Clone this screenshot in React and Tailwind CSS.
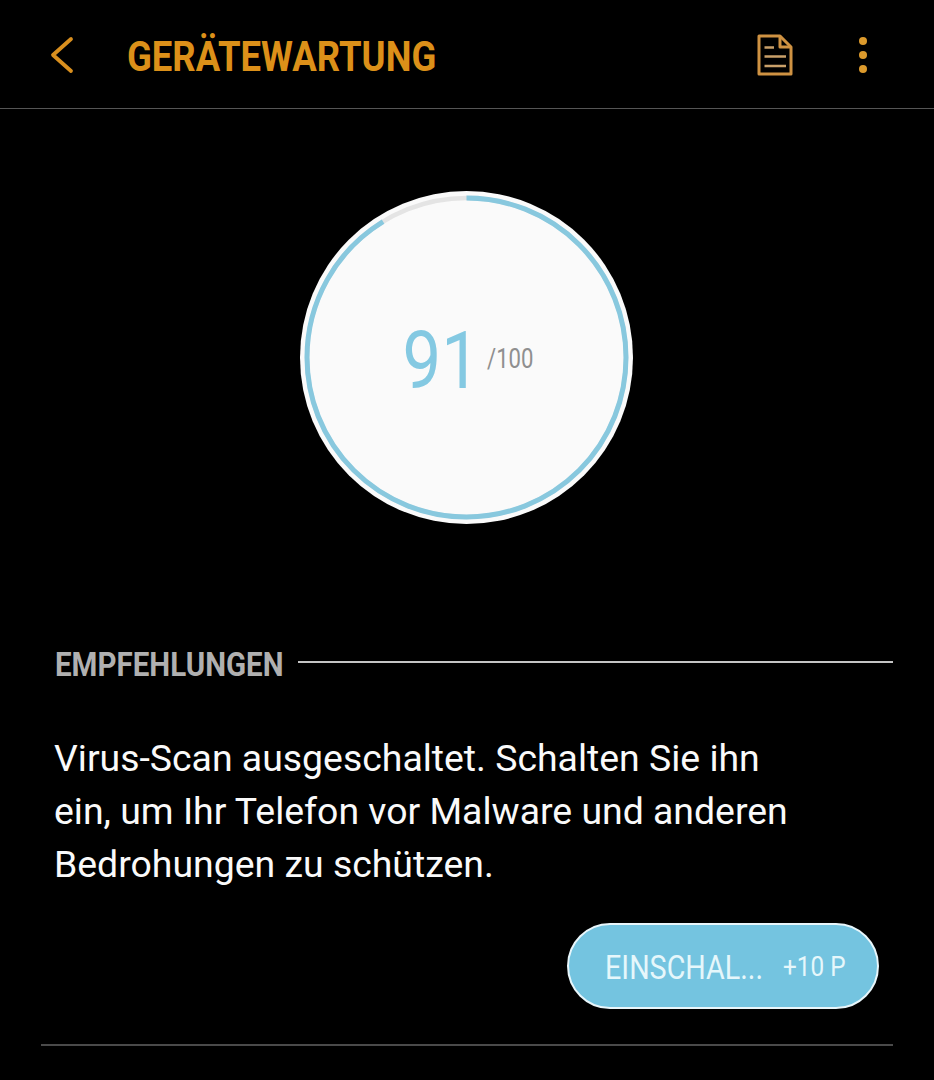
import React from 'react';

const Ring = () => {
    const r = 159.5;
    const c = 2 * Math.PI * r;
    return (
        <svg viewBox="0 0 333 333" className="absolute inset-0 w-full h-full -rotate-90">
            <circle cx="166.5" cy="166.5" r={r} fill="none" stroke="#e4e4e4" strokeWidth="4.5" />
            <circle
                cx="166.5"
                cy="166.5"
                r={r}
                fill="none"
                stroke="#88c8de"
                strokeWidth="5"
                strokeDasharray={`${c * 0.912} ${c}`}
            />
        </svg>
    );
};

const App = () => {
    return (
        <div className="w-[934px] h-[1080px] bg-black overflow-hidden font-['Roboto',sans-serif]">
            {/* Kopfzeile */}
            <header className="h-[109px] border-b border-[#555555] flex items-center pl-[50px] pr-[67px] pt-[2px]">
                <svg width="24" height="38" viewBox="0 0 24 38" fill="none">
                    <path d="M21 3 L3 19 L21 35" stroke="#d98f1e" strokeWidth="3.8" strokeLinecap="round" strokeLinejoin="round" />
                </svg>
                <h1 className="ml-[53px] mt-[4px] text-[42px] leading-none font-bold text-[#dc9019] origin-left scale-x-[0.868] whitespace-nowrap">
                    GERÄTEWARTUNG
                </h1>
                <div className="ml-auto flex items-center gap-[66px]">
                    <svg width="36" height="42" viewBox="0 0 36 42" fill="none" stroke="#cf9242" strokeWidth="3" strokeLinejoin="round">
                        <path d="M2 2 H23 L34 13 V40 H2 Z" />
                        <path d="M23 2 V13 H34" />
                        <path d="M7.5 13.5 H17 M7.5 22.5 H29 M7.5 32 H29" stroke="#c9a069" strokeWidth="2.6" />
                    </svg>
                    <div className="flex flex-col gap-[6px]">
                        <div className="w-2 h-2 rounded-full bg-[#dc9a2c]" />
                        <div className="w-2 h-2 rounded-full bg-[#dc9a2c]" />
                        <div className="w-2 h-2 rounded-full bg-[#dc9a2c]" />
                    </div>
                </div>
            </header>

            {/* Punktzahl */}
            <div className="pt-[82px] pr-[1px] flex justify-center">
                <div className="relative w-[333px] h-[333px] rounded-full bg-[#fafafa] flex items-center justify-center">
                    <Ring />
                    <div className="flex items-baseline pl-[2px] mt-[6px]">
                        <span className="text-[80px] leading-none font-[430] text-[#84c9e2] origin-right scale-x-[0.86]">91</span>
                        <span className="ml-[7px] text-[28px] leading-none text-[#8f8f8f] -translate-y-[20px] origin-left scale-x-[0.79]">/100</span>
                    </div>
                </div>
            </div>

            {/* Empfehlungen */}
            <div className="mt-[120px] pl-[55px] pr-[41px] flex items-center h-[40px]">
                <span className="w-[243px] shrink-0 text-[33px] leading-none font-bold text-[#b0b0b0] origin-left scale-x-[0.895] whitespace-nowrap">
                    EMPFEHLUNGEN
                </span>
                <div className="flex-1 h-[2px] bg-[#c4c4c4] -mt-[4px]" />
            </div>

            <p className="mt-[48px] ml-[54px] w-[800px] text-[37.4px] leading-[53px] text-[#fafafa] whitespace-nowrap">
                Virus-Scan ausgeschaltet. Schalten Sie ihn
                <br />
                ein, um Ihr Telefon vor Malware und anderen
                <br />
                Bedrohungen zu schützen.
            </p>

            <div className="mt-[32px] pr-[55px] flex justify-end">
                <button className="w-[312px] h-[86px] rounded-full bg-[#74c4e0] border-2 border-[#e8f6fb] flex items-center pl-[36px] pt-[3px] text-[#e6f7fb] whitespace-nowrap">
                    <span className="w-[178px] text-left text-[33px] leading-none origin-left scale-x-[0.87]">EINSCHAL...</span>
                    <span className="text-[27px] leading-none origin-left scale-x-[0.9]">+10 P</span>
                </button>
            </div>

            <div className="mt-[35px] ml-[41px] mr-[41px] h-[2px] bg-[#4a4a4a]" />
        </div>
    );
};

export default App;
